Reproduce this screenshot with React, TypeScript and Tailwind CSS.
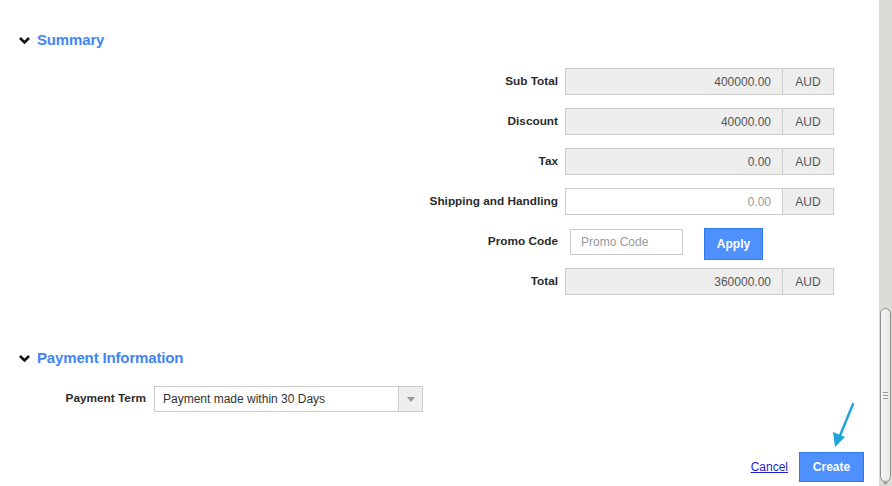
import React from "react";

const font = { fontFamily: '"Liberation Sans", Arial, sans-serif' };

const rows: { label: string; value: string; editable?: boolean }[] = [
  { label: "Sub Total", value: "400000.00" },
  { label: "Discount", value: "40000.00" },
  { label: "Tax", value: "0.00" },
  { label: "Shipping and Handling", value: "0.00", editable: true },
];

function Chevron() {
  return (
    <svg width="13" height="9" viewBox="0 0 13 9" className="shrink-0">
      <path d="M2 2 L6.5 6.5 L11 2" fill="none" stroke="#111" strokeWidth="2.6" />
    </svg>
  );
}

function SectionTitle({ title }: { title: string }) {
  return (
    <div className="flex items-center pl-[18px]">
      <Chevron />
      <span className="ml-[6px] text-[15px] font-bold leading-[18px] tracking-[-0.15px] text-[#4285f4]">{title}</span>
    </div>
  );
}

function AmountRow({ label, value, editable }: { label: string; value: string; editable?: boolean }) {
  return (
    <div className="flex h-[27px] items-center">
      <div className="w-[558px] text-right text-[11.8px] font-bold text-[#2b2b2b]">{label}</div>
      <div className="ml-[7px] flex h-[27px]">
        <div
          className={
            editable
              ? "flex w-[218px] items-center justify-end border border-[#ccc] bg-white pr-[11px] text-[12px] text-[#999]"
              : "flex w-[218px] items-center justify-end border border-[#ccc] bg-[#eeeeee] pr-[11px] text-[12px] text-[#555]"
          }
        >
          {value}
        </div>
        <div className="flex w-[51px] items-center justify-center border border-l-0 border-[#ccc] bg-[#eeeeee] text-[12px] text-[#555]">
          AUD
        </div>
      </div>
    </div>
  );
}

function Scrollbar() {
  return (
    <div className="relative flex w-[13px] shrink-0 flex-col bg-[#dcdad5]">
      <div className="flex-1" />
      <div className="mx-[1px] mb-[4px] flex h-[174px] items-center justify-center rounded-[6px] border border-[#8f8f8f] bg-gradient-to-r from-[#f6f6f5] to-[#e9e8e6]">
        <div className="flex flex-col gap-[2px]">
          <div className="h-px w-[5px] bg-[#999]" />
          <div className="h-px w-[5px] bg-[#999]" />
          <div className="h-px w-[5px] bg-[#999]" />
        </div>
      </div>
      <svg width="13" height="4" viewBox="0 0 13 4" className="absolute bottom-0 left-0">
        <path d="M4 0 L9 0 L6.5 3 Z" fill="#999" />
      </svg>
    </div>
  );
}

export default function App() {
  return (
    <div className="flex h-[486px] w-[892px] overflow-hidden bg-white" style={font}>
      <div className="relative flex flex-1 flex-col pt-[31px]">
        <SectionTitle title="Summary" />

        <div className="mt-[19px] flex flex-col gap-[13px]">
          {rows.map((r) => (
            <AmountRow key={r.label} {...r} />
          ))}

          <div className="flex h-[27px] items-center">
            <div className="w-[558px] text-right text-[11.8px] font-bold text-[#2b2b2b]">Promo Code</div>
            <div className="ml-[12px] flex h-[26px] w-[113px] items-center border border-[#ccc] bg-white pl-[10px] text-[12px] text-[#999]">
              Promo Code
            </div>
            <button className="ml-[21px] mt-[5px] h-[32px] w-[59px] border border-[#3079ed] bg-[#4d90fe] text-[12px] font-bold text-white">
              Apply
            </button>
          </div>

          <AmountRow label="Total" value="360000.00" />
        </div>

        <div className="mt-[54px]">
          <SectionTitle title="Payment Information" />
        </div>

        <div className="mt-[19px] flex h-[26px] items-center">
          <div className="w-[146px] text-right text-[11.8px] font-bold text-[#2b2b2b]">Payment Term</div>
          <div className="ml-[8px] flex h-[26px] w-[269px] border border-[#ccc] bg-white">
            <div className="flex flex-1 items-center pl-[8px] text-[12px] text-[#333]">Payment made within 30 Days</div>
            <div className="flex w-[24px] items-center justify-center border-l border-[#ccc] bg-[#eeeeee]">
              <svg width="8" height="5" viewBox="0 0 8 5">
                <path d="M0 0 L8 0 L4 5 Z" fill="#999" />
              </svg>
            </div>
          </div>
        </div>

        <div className="mt-[40px] flex items-center justify-end pr-[15px]">
          <a href="#" className="text-[12px] text-[#1f1fd0] underline">
            Cancel
          </a>
          <button className="ml-[11px] h-[30px] w-[65px] border border-[#3079ed] bg-[#4d90fe] text-[12px] font-bold text-white">
            Create
          </button>
        </div>

        <svg width="30" height="50" viewBox="0 0 30 50" className="absolute left-[830px] top-[400px]">
          <path d="M23 4 L9 38" fill="none" stroke="#1ea5dd" strokeWidth="2.5" strokeLinecap="round" />
          <path d="M5 47 L3 32 L15 37 Z" fill="#1ea5dd" />
        </svg>
      </div>
      <Scrollbar />
    </div>
  );
}
